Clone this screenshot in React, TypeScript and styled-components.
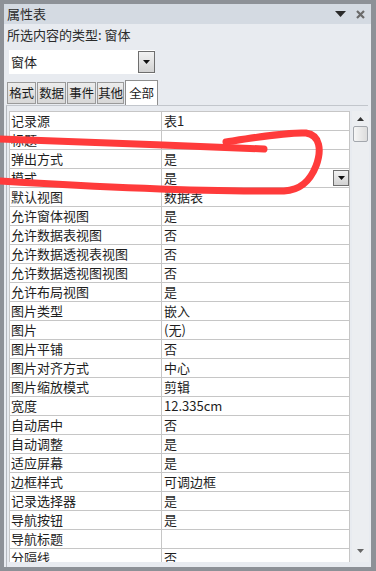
import React from "react";
import styled, { createGlobalStyle } from "styled-components";

const GlobalStyle = createGlobalStyle`
  html, body {
    margin: 0;
    padding: 0;
    background: #ffffff;
  }
  * {
    box-sizing: border-box;
  }
`;

const Page = styled.div`
  position: relative;
  width: 376px;
  height: 571px;
  font-family: "Noto Sans CJK SC", "Noto Sans", sans-serif;
  font-size: 13px;
  color: #1e1e1e;
`;
const Frame = styled.div`
  width: 100%;
  height: 100%;
  border-style: solid;
  border-color: #8d9197;
  border-width: 4px 5px 4px 4px;
  background-color: #e8ebf0;
  display: flex;
  flex-direction: column;
`;
const TitleBar = styled.div`
  height: 20px;
  flex: none;
  display: flex;
  align-items: center;
  padding: 0 6px 0 3px;
  background-color: #d4dae2;
  color: #2b2b2b;
  line-height: 20px;
`;
const TitleText = styled.span`
  flex: 1;
`;
const TitleIcons = styled.div`
  display: flex;
  align-items: center;
  gap: 10px;
`;
const Body = styled.div`
  flex: 1;
  min-height: 0;
  display: flex;
  flex-direction: column;
  padding: 0 3px;
`;
const TypeLabel = styled.div`
  height: 22px;
  line-height: 22px;
  color: #2b2b2b;
`;
const Combo = styled.div`
  margin: 4px 0 0 2px;
  width: 146px;
  height: 24px;
  display: flex;
  align-items: center;
  background-color: #ffffff;
`;
const ComboText = styled.span`
  flex: 1;
  padding-left: 2px;
  line-height: 24px;
`;
const DropButton = styled.div<{ $size: number }>`
  width: ${(p) => p.$size}px;
  height: ${(p) => p.$size + 5}px;
  flex: none;
  display: flex;
  align-items: center;
  justify-content: center;
  border: 1px solid #6e6e6e;
  background: linear-gradient(#f2f2f2, #d2d2d2);
`;
const SmallDropButton = styled(DropButton)`
  height: ${(p) => p.$size}px;
  margin-left: auto;
  margin-right: 0;
`;
const TabStrip = styled.div`
  margin-top: 6px;
  height: 25px;
  display: flex;
  align-items: flex-end;
  gap: 1px;
`;
const Tab = styled.div<{ $active?: boolean; $w: number }>`
  width: ${(p) => p.$w}px;
  height: ${(p) => (p.$active ? 25 : 22)}px;
  margin-bottom: ${(p) => (p.$active ? 0 : 1)}px;
  flex: none;
  display: flex;
  align-items: center;
  justify-content: center;
  border: 1px solid ${(p) => (p.$active ? "#8f8f8f" : "#9a9a9a")};
  border-bottom: ${(p) => (p.$active ? "none" : "1px solid #9a9a9a")};
  background: ${(p) =>
    p.$active ? "#ffffff" : "linear-gradient(#ececec, #d7d7d7)"};
  color: #1a1a1a;
  font-size: 12.5px;
  line-height: 20px;
  white-space: nowrap;
  letter-spacing: -0.3px;
`;
const TabPage = styled.div`
  flex: 1;
  min-height: 0;
  margin-left: -1px;
  border-top: 1px solid #c2c6cc;
  border-left: 1px solid #b5b9bf;
  display: flex;
  gap: 2px;
  padding: 5px 0 5px 2px;
`;
const Viewport = styled.div`
  width: 341px;
  flex: none;
  overflow: hidden;
`;
const Table = styled.div`
  border-top: 1px solid #c6c6c6;
  border-left: 1px solid #c6c6c6;
  background-color: #ffffff;
`;
const Row = styled.div`
  display: grid;
  grid-template-columns: 152px 188px;
  height: 19px;
`;
const Cell = styled.div<{ $pad: number }>`
  display: flex;
  align-items: center;
  border-right: 1px solid #c6c6c6;
  border-bottom: 1px solid #c6c6c6;
  padding-left: ${(p) => p.$pad}px;
  line-height: 18px;
  white-space: nowrap;
  overflow: hidden;
`;
const ScrollBar = styled.div`
  width: 17px;
  flex: none;
  display: flex;
  flex-direction: column;
  align-items: center;
  background-color: #eceef1;
`;
const Thumb = styled.div`
  width: 15px;
  height: 16px;
  margin-top: 4px;
  border: 1px solid #a3a7ad;
  border-radius: 2px;
  background: linear-gradient(90deg, #f6f6f6, #dcdcdc);
`;
const ArrowBox = styled.div<{ $top: number }>`
  margin-top: ${(p) => p.$top}px;
  height: 6px;
  display: flex;
  align-items: center;
`;
const Overlay = styled.svg`
  position: absolute;
  left: 0;
  top: 0;
  pointer-events: none;
`;

type Property = {
  name: string;
  value: string;
  combo?: boolean;
};

const properties: Property[] = [
  { name: "记录源", value: "表1" },
  { name: "标题", value: "" },
  { name: "弹出方式", value: "是" },
  { name: "模式", value: "是", combo: true },
  { name: "默认视图", value: "数据表" },
  { name: "允许窗体视图", value: "是" },
  { name: "允许数据表视图", value: "否" },
  { name: "允许数据透视表视图", value: "否" },
  { name: "允许数据透视图视图", value: "否" },
  { name: "允许布局视图", value: "是" },
  { name: "图片类型", value: "嵌入" },
  { name: "图片", value: "(无)" },
  { name: "图片平铺", value: "否" },
  { name: "图片对齐方式", value: "中心" },
  { name: "图片缩放模式", value: "剪辑" },
  { name: "宽度", value: "12.335cm" },
  { name: "自动居中", value: "否" },
  { name: "自动调整", value: "是" },
  { name: "适应屏幕", value: "是" },
  { name: "边框样式", value: "可调边框" },
  { name: "记录选择器", value: "是" },
  { name: "导航按钮", value: "是" },
  { name: "导航标题", value: "" },
  { name: "分隔线", value: "否" },
];

const tabs = [
  { label: "格式", w: 29 },
  { label: "数据", w: 29 },
  { label: "事件", w: 29 },
  { label: "其他", w: 27 },
  { label: "全部", w: 33, active: true },
];

function Caret({ color = "#111" }: { color?: string }) {
  return (
    <svg width="7" height="4" viewBox="0 0 7 4">
      <path d="M0 0 H7 L3.5 4 Z" fill={color} />
    </svg>
  );
}

export default function App() {
  return (
    <Page>
      <GlobalStyle />
      <Frame>
        <TitleBar>
          <TitleText>属性表</TitleText>
          <TitleIcons>
            <svg width="11" height="6" viewBox="0 0 11 6">
              <path d="M0 0 H11 L5.5 6 Z" fill="#2a2a2a" />
            </svg>
            <svg width="9" height="9" viewBox="0 0 9 9">
              <path
                d="M1 1 L8 8 M8 1 L1 8"
                stroke="#6a6a6a"
                strokeWidth="2.2"
              />
            </svg>
          </TitleIcons>
        </TitleBar>
        <Body>
          <TypeLabel>所选内容的类型: 窗体</TypeLabel>
          <Combo>
            <ComboText>窗体</ComboText>
            <DropButton $size={17}>
              <Caret />
            </DropButton>
          </Combo>
          <TabStrip>
            {tabs.map((t) => (
              <Tab key={t.label} $w={t.w} $active={t.active}>
                {t.label}
              </Tab>
            ))}
          </TabStrip>
          <TabPage>
            <Viewport>
              <Table>
                {properties.map((p) => (
                  <Row key={p.name}>
                    <Cell $pad={1}>{p.name}</Cell>
                    <Cell $pad={2}>
                      {p.value}
                      {p.combo && (
                        <SmallDropButton $size={16}>
                          <Caret />
                        </SmallDropButton>
                      )}
                    </Cell>
                  </Row>
                ))}
              </Table>
            </Viewport>
            <ScrollBar>
              <ArrowBox $top={5}>
                <svg width="7" height="4" viewBox="0 0 7 4">
                  <path d="M0 4 H7 L3.5 0 Z" fill="#333" />
                </svg>
              </ArrowBox>
              <Thumb />
              <ArrowBox $top={406}>
                <Caret color="#666" />
              </ArrowBox>
            </ScrollBar>
          </TabPage>
        </Body>
      </Frame>
      <Overlay width="376" height="571" viewBox="0 0 376 571">
        <g
          fill="none"
          stroke="#ff3b3b"
          strokeWidth="7"
          strokeLinecap="round"
          strokeLinejoin="round"
        >
          <path d="M0 139 C 70 141 180 146 264 149" />
          <path d="M226 142 C 258 137 288 132 306 133 C 320 135 322 150 316 166 C 310 181 301 190 284 191 C 200 192 100 187 0 181" />
        </g>
      </Overlay>
    </Page>
  );
}
